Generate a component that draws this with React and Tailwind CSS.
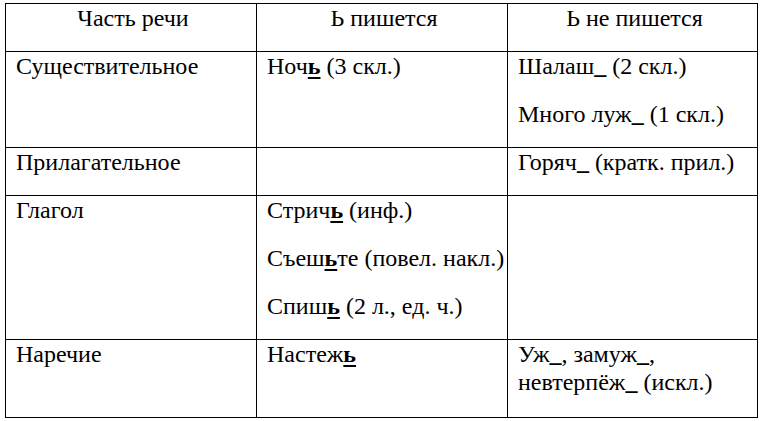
import React from 'react'

const serif = "font-['Liberation_Serif','Times_New_Roman',serif]"

function B({ children }) {
  return (
    <span className={`${serif} font-bold underline decoration-2 underline-offset-[3px]`}>
      {children}
    </span>
  )
}

function U() {
  return <span className={`${serif} font-bold`}>_</span>
}

function P({ children }) {
  return <div className={`${serif} leading-[28px] mb-[20px] whitespace-nowrap`}>{children}</div>
}

function Cell({ children, head = false }) {
  return (
    <div className={`${serif} border-r border-b border-black pl-[10px] pr-[6px] ${head ? 'text-center' : ''}`}>
      {children}
    </div>
  )
}

const rows = [
  {
    part: 'Существительное',
    yes: [<>Ноч<B>ь</B> (3 скл.)</>],
    no: [<>Шалаш<U /> (2 скл.)</>, <>Много луж<U /> (1 скл.)</>]
  },
  {
    part: 'Прилагательное',
    yes: [],
    no: [<>Горяч<U /> (кратк. прил.)</>]
  },
  {
    part: 'Глагол',
    yes: [
      <>Стрич<B>ь</B> (инф.)</>,
      <>Съеш<B>ь</B>те (повел. накл.)</>,
      <>Спиш<B>ь</B> (2 л., ед. ч.)</>
    ],
    no: []
  },
  {
    part: 'Наречие',
    yes: [<>Настеж<B>ь</B></>],
    no: [<>Уж<U />, замуж<U />,<br />невтерпёж<U /> (искл.)</>]
  }
]

export default function App() {
  return (
    <div className={`${serif} w-[761px] h-[421px] bg-white text-black pt-[3px] pl-[5px] text-[24px]`}>
      <div className="grid grid-cols-[251px_251px_250px] grid-rows-[48px_96px_48px_144px_78px] w-fit border-l border-t border-black">
        <Cell head><P>Часть речи</P></Cell>
        <Cell head><P>Ь пишется</P></Cell>
        <Cell head><P>Ь не пишется</P></Cell>
        {rows.map((r) => (
          <React.Fragment key={r.part}>
            <Cell><P>{r.part}</P></Cell>
            <Cell>{r.yes.map((t, i) => <P key={i}>{t}</P>)}</Cell>
            <Cell>{r.no.map((t, i) => <P key={i}>{t}</P>)}</Cell>
          </React.Fragment>
        ))}
      </div>
    </div>
  )
}
